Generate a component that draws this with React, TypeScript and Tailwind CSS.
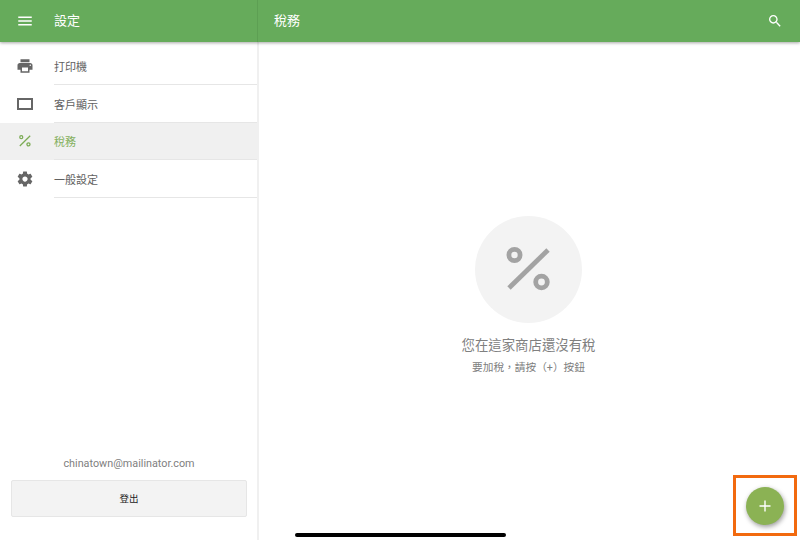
// App.tsx
const font = { cjk: "font-['Roboto','Noto_Sans_CJK_TC',sans-serif]" };

function MenuIcon() {
  return (
    <svg width="18" height="18" viewBox="0 0 24 24" fill="currentColor">
      <path d="M3 18h18v-2H3v2zm0-5h18v-2H3v2zm0-7v2h18V6H3z" />
    </svg>
  );
}

function SearchIcon() {
  return (
    <svg width="16" height="16" viewBox="0 0 24 24" fill="currentColor">
      <path d="M15.5 14h-.79l-.28-.27C15.41 12.59 16 11.11 16 9.5 16 5.91 13.09 3 9.5 3S3 5.91 3 9.5 5.91 16 9.5 16c1.61 0 3.09-.59 4.23-1.57l.27.28v.79l5 4.99L20.49 19l-4.99-5zm-6 0C7.01 14 5 11.99 5 9.5S7.01 5 9.5 5 14 7.01 14 9.5 11.99 14 9.5 14z" />
    </svg>
  );
}

function PrintIcon() {
  return (
    <svg width="18" height="18" viewBox="0 0 24 24" fill="currentColor">
      <path d="M19 8H5c-1.66 0-3 1.34-3 3v6h4v4h12v-4h4v-6c0-1.66-1.34-3-3-3zm-3 11H8v-5h8v5zm3-7c-.55 0-1-.45-1-1s.45-1 1-1 1 .45 1 1-.45 1-1 1zm-1-9H6v4h12V3z" />
    </svg>
  );
}

function DisplayIcon() {
  return (
    <svg width="16" height="12" viewBox="0 0 16 12" fill="none" stroke="currentColor" strokeWidth="2">
      <rect x="1" y="1" width="14" height="10" />
    </svg>
  );
}

// same drawing at both sizes, thick rings with a small hole
function PercentIcon({ size }: { size: number }) {
  return (
    <svg width={size} height={size} viewBox="0 0 45 45" fill="none" stroke="currentColor" strokeWidth="4.8">
      <circle cx="8.5" cy="8" r="5.6" />
      <circle cx="35.5" cy="35" r="5.8" />
      <path d="M42 3 3 41" />
    </svg>
  );
}

function GearIcon() {
  return (
    <svg width="18" height="18" viewBox="0 0 24 24" fill="currentColor">
      <path d="M19.43 12.98c.04-.32.07-.64.07-.98s-.03-.66-.07-.98l2.11-1.65c.19-.15.24-.42.12-.64l-2-3.46c-.12-.22-.39-.3-.61-.22l-2.49 1c-.52-.4-1.08-.73-1.69-.98l-.38-2.65C14.46 2.18 14.25 2 14 2h-4c-.25 0-.46.18-.49.42l-.38 2.65c-.61.25-1.17.59-1.69.98l-2.49-1c-.23-.09-.49 0-.61.22l-2 3.46c-.13.22-.07.49.12.64l2.11 1.65c-.04.32-.07.65-.07.98s.03.66.07.98l-2.11 1.65c-.19.15-.24.42-.12.64l2 3.46c.12.22.39.3.61.22l2.49-1c.52.4 1.08.73 1.69.98l.38 2.65c.03.24.24.42.49.42h4c.25 0 .46-.18.49-.42l.38-2.65c.61-.25 1.17-.59 1.69-.98l2.49 1c.23.09.49 0 .61-.22l2-3.46c.12-.22.07-.49-.12-.64l-2.11-1.65zM12 15.5c-1.93 0-3.5-1.57-3.5-3.5s1.57-3.5 3.5-3.5 3.5 1.57 3.5 3.5-1.57 3.5-3.5 3.5z" />
    </svg>
  );
}

const items = [
  { label: '打印機', icon: <PrintIcon /> },
  { label: '客戶顯示', icon: <DisplayIcon /> },
  { label: '稅務', icon: <PercentIcon size={12} />, active: true },
  { label: '一般設定', icon: <GearIcon /> },
];

export default function App() {
  return (
    <div className={`relative flex h-[540px] w-[800px] flex-col overflow-hidden bg-white ${font.cjk}`}>
      <header className="z-10 flex h-[42px] shrink-0 bg-[#66ab5b] text-white shadow-[0_1px_3px_rgba(0,0,0,0.35)]">
        <div className="flex w-[258px] shrink-0 items-center border-r border-[#5d9f53]">
          <div className="flex w-[54px] justify-center pr-[5px]">
            <MenuIcon />
          </div>
          <span className="text-[13px]">設定</span>
        </div>
        <div className="flex flex-1 items-center justify-between pl-[16px] pr-[17px]">
          <span className="text-[13px]">稅務</span>
          <SearchIcon />
        </div>
      </header>

      <div className="flex min-h-0 flex-1">
        <aside className="flex w-[259px] shrink-0 flex-col border-r-2 border-[#f0f0f0]">
          <nav className="pt-[5.5px]">
            {items.map((item) => (
              <div
                key={item.label}
                className={`flex h-[37.5px] items-stretch ${item.active ? 'bg-[#f0f0f0] text-[#86b060]' : 'text-[#616161]'}`}
              >
                <div className={`flex w-[54px] shrink-0 items-center justify-center pr-[5px] ${item.active ? 'text-[#7cab55]' : 'text-[#666666]'}`}>
                  {item.icon}
                </div>
                <div className="flex flex-1 items-center border-b border-[#e6e6e6] pt-[5px] text-[11px]">
                  {item.label}
                </div>
              </div>
            ))}
          </nav>
          <div className="mt-auto pb-[23px] pl-[11px] pr-[10px]">
            <p className="mb-[8px] text-center text-[10.8px] leading-[16px] text-[#808080]">chinatown@mailinator.com</p>
            <button className="flex h-[37px] w-full items-center justify-center rounded-[2px] border border-[#e6e6e6] bg-[#f3f3f3] pt-[2px] text-[9.5px] text-[#222222]">
              登出
            </button>
          </div>
        </aside>

        <main className="flex flex-1 flex-col items-center pr-[2px] pt-[174px]">
          <div className="flex h-[107px] w-[107px] items-center justify-center rounded-full bg-[#f3f3f3] text-[#a3a3a3]">
            <PercentIcon size={45} />
          </div>
          <p className="mt-[13px] text-[13.4px] leading-[20px] text-[#808080]">您在這家商店還沒有稅</p>
          <p className="mt-[4px] text-[10.7px] leading-[16px] text-[#808080]">要加稅，請按（+）按鈕</p>
        </main>
      </div>

      {/* fab + highlight */}
      <div className="absolute left-[733px] top-[475px] flex h-[61px] w-[64px] items-center justify-center border-[3px] border-[#f26a0f]">
        <button className="flex h-[38px] w-[38px] items-center justify-center rounded-full bg-[#8bb254] text-white shadow-[1px_2px_5px_rgba(0,0,0,0.4)]">
          <svg width="14" height="14" viewBox="0 0 14 14" fill="none" stroke="currentColor" strokeWidth="1.4">
            <path d="M7 1.5v11M1.5 7h11" />
          </svg>
        </button>
      </div>

      {/* home indicator */}
      <div className="absolute left-[295px] top-[533px] h-[4px] w-[211px] rounded-full bg-black" />
    </div>
  );
}
